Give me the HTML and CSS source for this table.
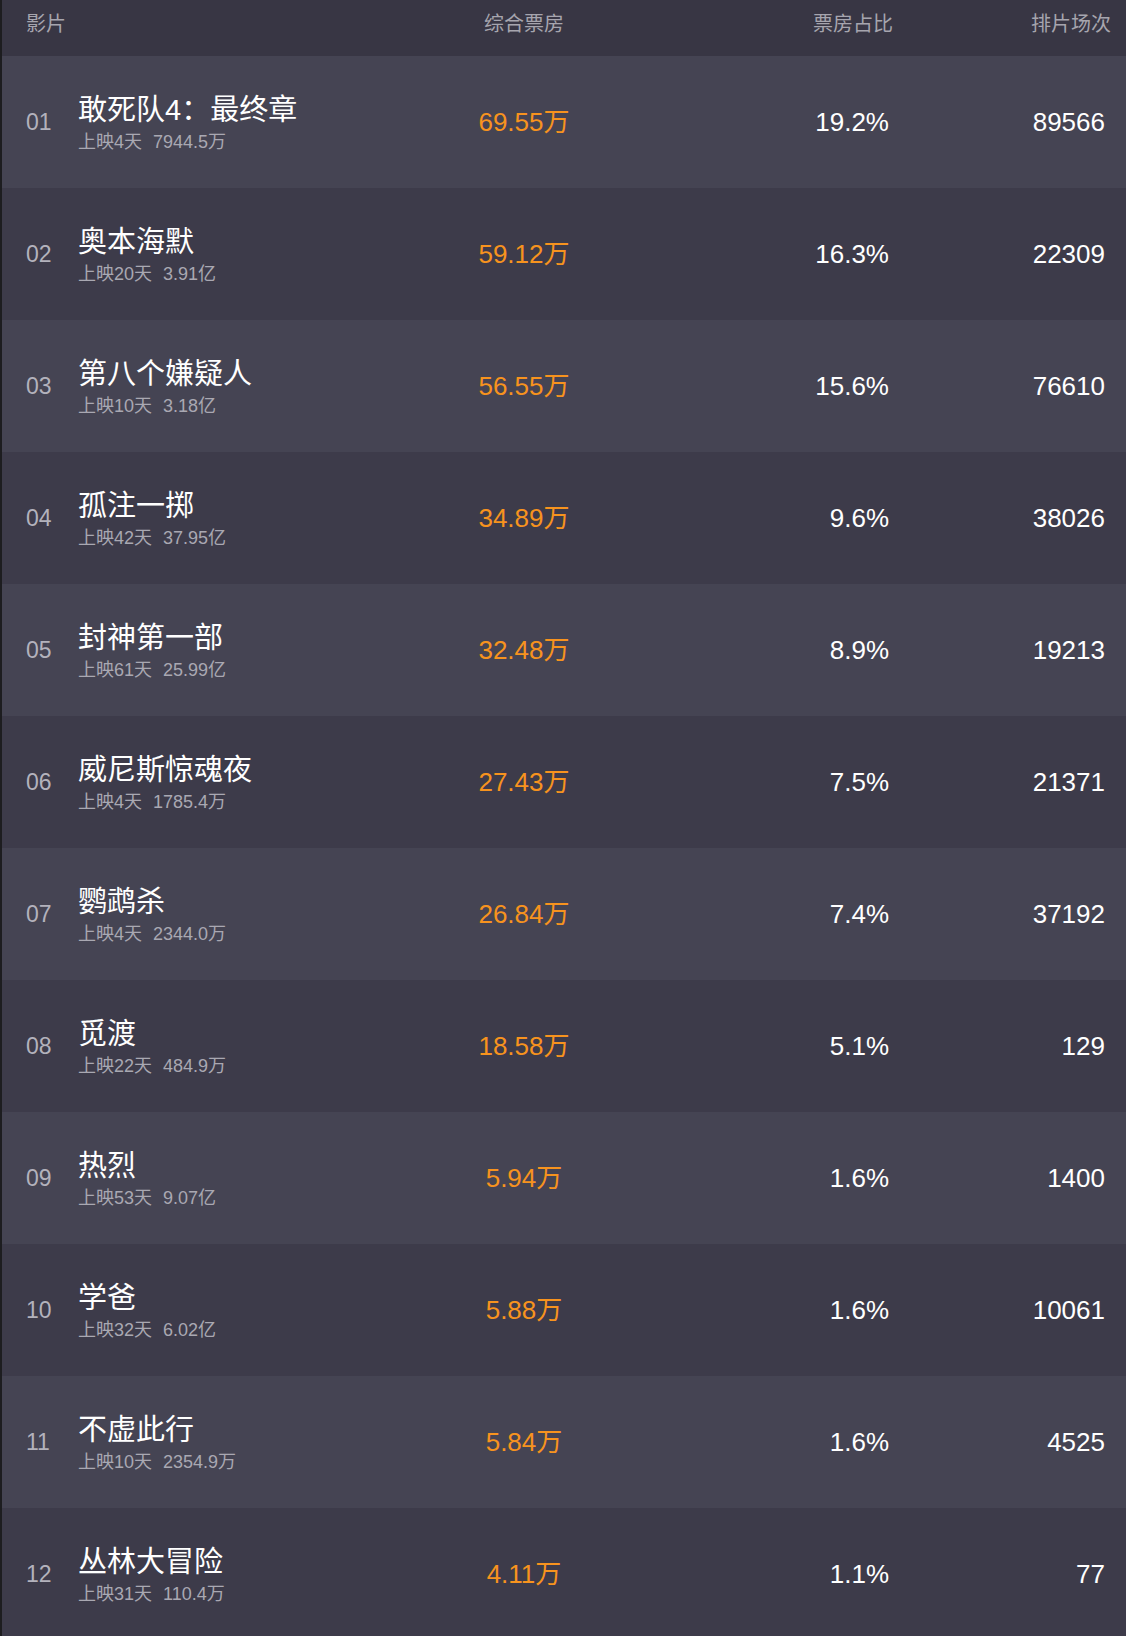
FILE: index.html
```html
<!DOCTYPE html>
<html lang="zh-CN">
<head>
<meta charset="utf-8">
<title>票房榜</title>
<link rel="stylesheet" href="styles.css">
</head>
<body>
<div class="board">
  <div class="head">
    <div class="h-film">影片</div>
    <div class="h-box">综合票房</div>
    <div class="h-ratio">票房占比</div>
    <div class="h-count">排片场次</div>
  </div>

  <div class="row">
    <div class="rank">01</div>
    <div class="film"><div class="name">敢死队4：最终章</div><div class="sub"><span>上映4天</span><span class="sum">7944.5万</span></div></div>
    <div class="box">69.55万</div><div class="ratio">19.2%</div><div class="count">89566</div>
  </div>
  <div class="row">
    <div class="rank">02</div>
    <div class="film"><div class="name">奥本海默</div><div class="sub"><span>上映20天</span><span class="sum">3.91亿</span></div></div>
    <div class="box">59.12万</div><div class="ratio">16.3%</div><div class="count">22309</div>
  </div>
  <div class="row">
    <div class="rank">03</div>
    <div class="film"><div class="name">第八个嫌疑人</div><div class="sub"><span>上映10天</span><span class="sum">3.18亿</span></div></div>
    <div class="box">56.55万</div><div class="ratio">15.6%</div><div class="count">76610</div>
  </div>
  <div class="row">
    <div class="rank">04</div>
    <div class="film"><div class="name">孤注一掷</div><div class="sub"><span>上映42天</span><span class="sum">37.95亿</span></div></div>
    <div class="box">34.89万</div><div class="ratio">9.6%</div><div class="count">38026</div>
  </div>
  <div class="row">
    <div class="rank">05</div>
    <div class="film"><div class="name">封神第一部</div><div class="sub"><span>上映61天</span><span class="sum">25.99亿</span></div></div>
    <div class="box">32.48万</div><div class="ratio">8.9%</div><div class="count">19213</div>
  </div>
  <div class="row">
    <div class="rank">06</div>
    <div class="film"><div class="name">威尼斯惊魂夜</div><div class="sub"><span>上映4天</span><span class="sum">1785.4万</span></div></div>
    <div class="box">27.43万</div><div class="ratio">7.5%</div><div class="count">21371</div>
  </div>
  <div class="row">
    <div class="rank">07</div>
    <div class="film"><div class="name">鹦鹉杀</div><div class="sub"><span>上映4天</span><span class="sum">2344.0万</span></div></div>
    <div class="box">26.84万</div><div class="ratio">7.4%</div><div class="count">37192</div>
  </div>
  <div class="row">
    <div class="rank">08</div>
    <div class="film"><div class="name">觅渡</div><div class="sub"><span>上映22天</span><span class="sum">484.9万</span></div></div>
    <div class="box">18.58万</div><div class="ratio">5.1%</div><div class="count">129</div>
  </div>
  <div class="row">
    <div class="rank">09</div>
    <div class="film"><div class="name">热烈</div><div class="sub"><span>上映53天</span><span class="sum">9.07亿</span></div></div>
    <div class="box">5.94万</div><div class="ratio">1.6%</div><div class="count">1400</div>
  </div>
  <div class="row">
    <div class="rank">10</div>
    <div class="film"><div class="name">学爸</div><div class="sub"><span>上映32天</span><span class="sum">6.02亿</span></div></div>
    <div class="box">5.88万</div><div class="ratio">1.6%</div><div class="count">10061</div>
  </div>
  <div class="row">
    <div class="rank">11</div>
    <div class="film"><div class="name">不虚此行</div><div class="sub"><span>上映10天</span><span class="sum">2354.9万</span></div></div>
    <div class="box">5.84万</div><div class="ratio">1.6%</div><div class="count">4525</div>
  </div>
  <div class="row">
    <div class="rank">12</div>
    <div class="film"><div class="name">丛林大冒险</div><div class="sub"><span>上映31天</span><span class="sum">110.4万</span></div></div>
    <div class="box">4.11万</div><div class="ratio">1.1%</div><div class="count">77</div>
  </div>
</div>
</body>
</html>
```

FILE: styles.css
```css
html, body {
  margin: 0;
  padding: 0;
  background: #1d1d20;
}

body {
  font-family: "Liberation Sans", "Noto Sans CJK SC", sans-serif;
  color: #ffffff;
}

.board {
  margin-left: 2px;
  width: 1124px;
}

.head {
  display: grid;
  grid-template-columns: 422px 200px 269px 218px;
  padding-right: 15px;
  height: 56px;
  box-sizing: border-box;
  padding-top: 14px;
  background: #383644;
  color: #a6a5ae;
  font-size: 20px;
  line-height: 20px;
}

.h-film {
  padding-left: 24px;
}

.h-box {
  text-align: center;
}

.h-ratio,
.h-count {
  text-align: right;
}

.row {
  display: grid;
  grid-template-columns: 76px 346px 200px 265px 216px;
  padding-right: 21px;
  height: 132px;
  align-items: center;
  background: #454453;
}

.row:nth-child(odd) {
  background: #3d3b4a;
}

.rank {
  padding-left: 24px;
  font-size: 23px;
  line-height: 23px;
  color: #b3b2bc;
}

.film {
  display: flex;
  flex-direction: column;
  padding-top: 3px;
}

.name {
  font-size: 29px;
  line-height: 29px;
  color: #ffffff;
  white-space: nowrap;
}

.sub {
  margin-top: 8px;
  font-size: 18px;
  line-height: 18px;
  color: #a9a8b2;
  white-space: nowrap;
}

.sum {
  margin-left: 11px;
}

.box {
  text-align: center;
  font-size: 26px;
  line-height: 26px;
  color: #f7931e;
}

.ratio,
.count {
  text-align: right;
  font-size: 26px;
  line-height: 26px;
  color: #ffffff;
}
```
